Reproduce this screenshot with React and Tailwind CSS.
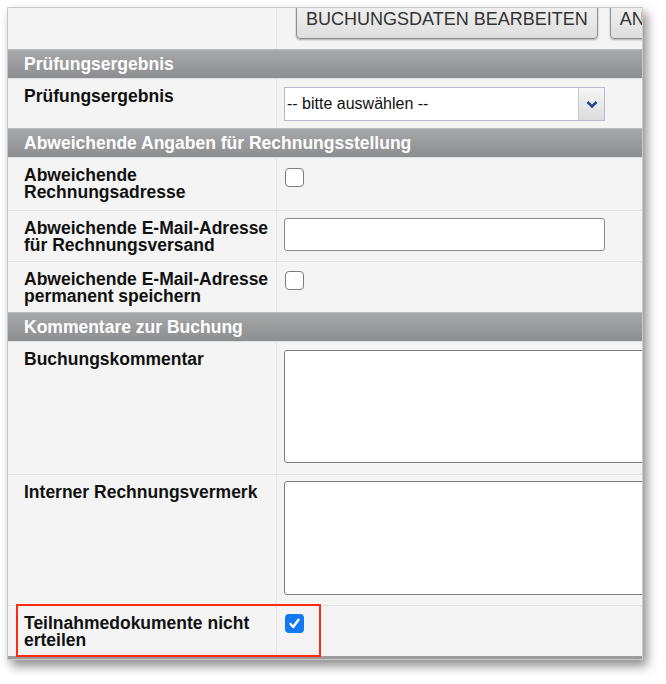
import React from 'react';

const font = { fontFamily: '"Liberation Sans", Arial, sans-serif' };

function SectionHeader({ title }) {
  return (
    <div className="h-[29px] border-t border-[#b9bbbd] bg-gradient-to-b from-[#a6a8aa] to-[#8c8e90] pl-[16px] flex items-center">
      <span className="text-[17.5px] font-bold text-white leading-[17px]">{title}</span>
    </div>
  );
}

function Row({ label, height, children, className = '' }) {
  return (
    <div className={`flex border-t border-[#e1e1e1] ${height} ${className}`}>
      <div className="w-[268px] shrink-0 pl-[16px] pr-[4px] pt-[9px] text-[17.5px] font-bold leading-[17px] text-[#111]">
        {label}
      </div>
      <div className="flex-1 border-l border-[#e3e3e3] pl-[7px] min-w-0">{children}</div>
    </div>
  );
}

function Checkbox({ checked = false }) {
  if (checked) {
    return (
      <div className="w-[19px] h-[19px] rounded-[4px] bg-[#1479f0] flex items-center justify-center">
        <svg width="13" height="13" viewBox="0 0 13 13">
          <path d="M2.5 7 L5.2 10 L10.5 2.8" fill="none" stroke="white" strokeWidth="2.4" strokeLinecap="round" strokeLinejoin="round" />
        </svg>
      </div>
    );
  }
  return <div className="w-[19px] h-[19px] rounded-[4px] border border-[#7c7c7c] bg-white" />;
}

export default function App() {
  return (
    <div className="w-[666px] h-[684px] bg-white pt-[7px] pl-[7px]" style={font}>
      <div className="w-[636px] h-[653px] border border-[#c9c9c9] bg-[#f4f4f4] overflow-hidden shadow-[4px_6px_10px_rgba(0,0,0,0.45)]">
        {/* action buttons, scrolled partly out of view */}
        <div className="flex h-[41px]">
          <div className="w-[268px] shrink-0" />
          <div className="flex-1 border-l border-[#e3e3e3] pl-[19px] flex gap-[12px] overflow-hidden">
            <div className="-mt-[8px] h-[39px] shrink-0 px-[9px] flex items-center rounded-b-[4px] border border-[#8e8e8e] bg-gradient-to-b from-[#f3f3f3] to-[#dedede] shadow-[0_1px_2px_rgba(0,0,0,0.3)] text-[18px] text-[#333] whitespace-nowrap">
              BUCHUNGSDATEN BEARBEITEN
            </div>
            <div className="-mt-[8px] h-[39px] shrink-0 px-[9px] flex items-center rounded-b-[4px] border border-[#8e8e8e] bg-gradient-to-b from-[#f3f3f3] to-[#dedede] shadow-[0_1px_2px_rgba(0,0,0,0.3)] text-[18px] text-[#333] whitespace-nowrap">
              ANMELDUNG
            </div>
          </div>
        </div>

        <SectionHeader title="Prüfungsergebnis" />
        <Row label="Prüfungsergebnis" height="h-[50px]">
          <div className="mt-[8px] w-[321px] h-[34px] flex border border-[#b9b9cd] bg-white">
            <div className="flex-1 flex items-center pl-[2px] text-[16px] text-[#111]">-- bitte auswählen --</div>
            <div className="w-[26px] border-l border-[#c6c6d6] bg-gradient-to-b from-[#f6f6f6] to-[#dcdcdc] flex items-center justify-center">
              <svg width="12" height="9" viewBox="0 0 12 9">
                <path d="M1.5 2 L6 6.5 L10.5 2" fill="none" stroke="#23468c" strokeWidth="2.6" />
              </svg>
            </div>
          </div>
        </Row>

        <SectionHeader title="Abweichende Angaben für Rechnungsstellung" />
        <Row label={<>Abweichende<br />Rechnungsadresse</>} height="h-[53px]">
          <div className="mt-[10px] ml-[1px]">
            <Checkbox />
          </div>
        </Row>
        <Row label={<>Abweichende E-Mail-Adresse<br />für Rechnungsversand</>} height="h-[51px]">
          <div className="mt-[7px] w-[321px] h-[33px] rounded-[3px] border border-[#8a8a8a] bg-white" />
        </Row>
        <Row label={<>Abweichende E-Mail-Adresse<br />permanent speichern</>} height="h-[51px]">
          <div className="mt-[9px] ml-[1px]">
            <Checkbox />
          </div>
        </Row>

        <SectionHeader title="Kommentare zur Buchung" />
        <Row label="Buchungskommentar" height="h-[133px]">
          <div className="mt-[8px] w-[380px] h-[113px] rounded-[3px] border border-[#7e7e7e] bg-white" />
        </Row>
        <Row label="Interner Rechnungsvermerk" height="h-[131px]">
          <div className="mt-[6px] w-[380px] h-[114px] rounded-[3px] border border-[#7e7e7e] bg-white" />
        </Row>
        <Row label={<>Teilnahmedokumente nicht<br />erteilen</>} height="h-[51px]" className="relative">
          <div className="mt-[8px] ml-[1px]">
            <Checkbox checked />
          </div>
          <div className="absolute left-[8px] top-[-2px] w-[305px] h-[53px] border-2 border-[#ff2a12] pointer-events-none" />
        </Row>
        <div className="h-[4px] bg-[#9b9b9b]" />
      </div>
    </div>
  );
}
